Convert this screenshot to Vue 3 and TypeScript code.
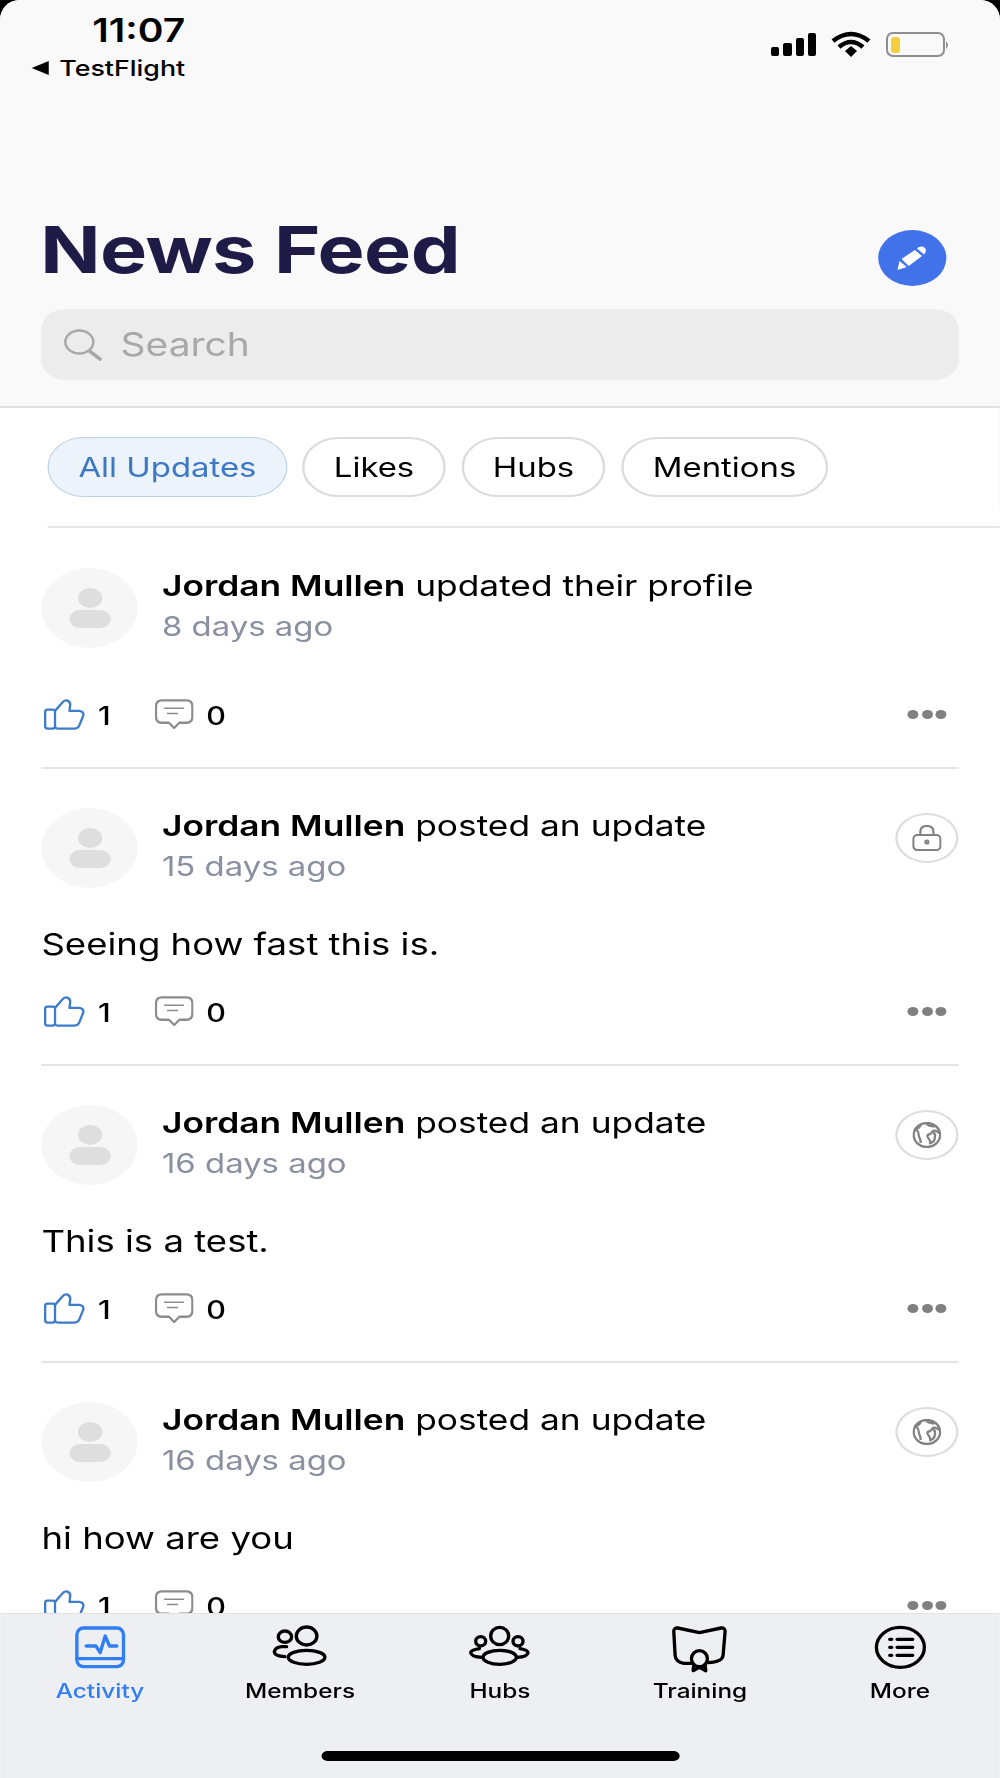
<template>
  <div class="phone">
    <header class="top">
      <div class="status">
        <div class="status-left">
          <span class="clock">11:07</span>
          <span class="back"><i class="back-arrow"></i>TestFlight</span>
        </div>
        <svg class="status-icons" viewBox="0 0 181 30" preserveAspectRatio="none">
          <rect x="0" y="17" width="8" height="9" rx="2" />
          <rect x="12" y="13" width="9" height="13" rx="2" />
          <rect x="25" y="8" width="8" height="18" rx="2" />
          <rect x="37" y="3" width="8" height="23" rx="2" />
          <path d="M62 11 Q80 -3 98 11 M68 17 Q80 7 92 17" fill="none" stroke="#000" stroke-width="4.5" />
          <path d="M74 21 L80 16 L86 21 L80 27 Z" />
          <rect x="116" y="3" width="57" height="23" rx="6" fill="none" stroke="#8e8e8e" stroke-width="2" />
          <rect x="120" y="7" width="9" height="16" rx="3" fill="#f5cf3e" />
          <path d="M175 11 Q179 15 175 19 Z" fill="#8e8e8e" />
        </svg>
      </div>
      <div class="title-row">
        <h1>News Feed</h1>
        <button class="compose">
          <svg viewBox="0 0 31 25" preserveAspectRatio="none">
            <path d="M1 24 L3 15 L10 21 Z M5 13 L18 4 L25 10 L12 20 Z M20 2.5 Q24 -1 28 2 Q30 5 27 8.500 Z" fill="#fff" />
          </svg>
        </button>
      </div>
      <div class="search">
        <svg viewBox="0 0 39 32" preserveAspectRatio="none">
          <ellipse cx="16" cy="13" rx="14" ry="11.500" fill="none" stroke="#a8a8a8" stroke-width="2.500" />
          <path d="M26 22 L38 31" stroke="#a8a8a8" stroke-width="3.500" />
        </svg>
        <span>Search</span>
      </div>
    </header>

    <nav class="chips">
      <span v-for="chip in chips" :key="chip" class="chip" :class="{ 'is-active': chip === 'All Updates' }">{{ chip }}</span>
    </nav>

    <main class="feed">
      <article v-for="post in posts" :key="post.id" class="post">
        <div class="post-head">
          <div class="avatar"><i class="avatar-head"></i><i class="avatar-body"></i></div>
          <div class="post-meta">
            <p class="post-title"><b>Jordan Mullen</b> {{ post.action }}</p>
            <p class="post-time">{{ post.time }}</p>
          </div>
          <span v-if="post.scope" class="scope">
            <svg v-if="post.scope === 'lock'" viewBox="0 0 29 26" preserveAspectRatio="none" fill="none" stroke="#828282" stroke-width="2.200">
              <rect x="1" y="10" width="27" height="15" rx="4" />
              <path d="M8 10 V7 Q8 1 14.500 1 Q21 1 21 7 V10" />
              <circle cx="14.500" cy="17" r="1.500" />
            </svg>
            <svg v-else viewBox="0 0 31 26" preserveAspectRatio="none" fill="none" stroke="#828282" stroke-width="2.400">
              <ellipse cx="15.500" cy="13" rx="14" ry="12" />
              <path d="M9 2.500 Q8 6 4 7 Q7 10 7 14 Q9 18 9 21 M15 2 Q19 5 24 4 M29 11 Q25 8 22 9 L19 12 Q14 13 17 16 Q19 18 19 21 Q24 20 24 15 Q25 12 22 11" />
            </svg>
          </span>
        </div>
        <p v-if="post.body" class="post-body">{{ post.body }}</p>
        <div class="actions">
          <svg class="ic-like" viewBox="0 0 126 94" preserveAspectRatio="none" fill="none" stroke="#3d7cc9" stroke-width="7" stroke-linejoin="round">
            <rect x="4" y="32" width="30" height="58" rx="7" />
            <path d="M34 36 L55 12 Q63 2 72 5 Q82 10 80 20 L78 36 L108 36 Q122 38 120 50 L108 80 Q104 90 92 90 L42 90 Q36 90 34 84" />
          </svg>
          <span class="count">1</span>
          <svg class="ic-comment" viewBox="0 0 120 94" preserveAspectRatio="none" fill="none" stroke="#8c8c8c" stroke-width="7" stroke-linejoin="round">
            <path d="M22 4 H98 Q116 4 116 22 V54 Q116 72 98 72 H76 L60 88 L44 72 H22 Q4 72 4 54 V22 Q4 4 22 4 Z" />
            <path d="M29 28 H90 M38 44 H72" stroke-width="5" />
          </svg>
          <span class="count">0</span>
          <span class="dots"><i></i><i></i><i></i></span>
        </div>
      </article>
    </main>

    <footer class="tabbar">
      <div class="tabs">
        <div v-for="tab in tabs" :key="tab.label" class="tab" :class="{ 'is-active': tab.label === 'Activity' }">
          <svg viewBox="0 0 170 138" preserveAspectRatio="none" fill="none" stroke="currentColor" stroke-width="10" stroke-linecap="round" stroke-linejoin="round">
            <g v-if="tab.label === 'Activity'">
              <rect x="15" y="6" width="140" height="116" rx="20" />
              <path d="M15 98 H155" />
              <path d="M43 60 H72 L85 80 L100 30 L113 60 H135" />
            </g>
            <g v-else-if="tab.label === 'Members'">
              <ellipse cx="105" cy="30" rx="31" ry="27" />
              <ellipse cx="40" cy="32" rx="20" ry="17" />
              <ellipse cx="105" cy="94" rx="55" ry="21" />
              <path d="M45 62 H30 Q10 64 8 78 Q10 90 40 92" />
            </g>
            <g v-else-if="tab.label === 'Hubs'">
              <ellipse cx="85" cy="30" rx="27" ry="26" />
              <ellipse cx="28" cy="46" rx="15" ry="14" />
              <ellipse cx="140" cy="46" rx="15" ry="14" />
              <ellipse cx="85" cy="94" rx="50" ry="21" />
              <path d="M24 68 Q-2 72 -2 80 Q0 92 32 94 M146 68 Q170 72 170 80 Q168 92 138 94" />
            </g>
            <g v-else-if="tab.label === 'Training'">
              <path d="M60 112 H38 Q14 108 12 88 L8 16 Q8 5 20 6 L85 20 L150 6 Q162 5 162 16 L156 88 Q154 108 110 110" />
              <circle cx="85" cy="98" r="24" />
              <path d="M68 116 L66 134 L85 124 L104 134 L102 116" />
            </g>
            <g v-else>
              <ellipse cx="85" cy="64" rx="72" ry="60" />
              <path d="M75 40 H122 M75 64 H122 M75 88 H122" />
              <path d="M53 40 H59 M53 64 H59 M53 88 H59" />
            </g>
          </svg>
          <span>{{ tab.label }}</span>
        </div>
      </div>
      <div class="home-bar"></div>
    </footer>
  </div>
</template>

<script setup lang="ts">
interface Post {
  id: number;
  action: string;
  time: string;
  body?: string;
  scope?: 'lock' | 'globe';
}

const chips: string[] = ['All Updates', 'Likes', 'Hubs', 'Mentions'];

const posts: Post[] = [
  { id: 1, action: 'updated their profile', time: '8 days ago' },
  { id: 2, action: 'posted an update', time: '15 days ago', body: 'Seeing how fast this is.', scope: 'lock' },
  { id: 3, action: 'posted an update', time: '16 days ago', body: 'This is a test.', scope: 'globe' },
  { id: 4, action: 'posted an update', time: '16 days ago', body: 'hi how are you', scope: 'globe' },
];

const tabs = [
  { label: 'Activity' },
  { label: 'Members' },
  { label: 'Hubs' },
  { label: 'Training' },
  { label: 'More' },
];
</script>

<style>
html,
body {
  margin: 0;
  background: #000;
  overflow: hidden;
}
</style>

<style scoped>
/* the capture is a phone screen stretched sideways, so the whole page is too */
.phone {
  width: 821px;
  height: 1778px;
  display: flex;
  flex-direction: column;
  overflow: hidden;
  background: #fff;
  border-radius: 16px 16px 0 0 / 20px 20px 0 0;
  transform: scaleX(1.218);
  transform-origin: left top;
  font-family: Inter, "Liberation Sans", sans-serif;
  color: #000;
}

p,
h1 {
  margin: 0;
}

.top {
  flex-shrink: 0;
  padding: 0 34px 26px;
  background: #f9f9f9;
  border-bottom: 2px solid #e2e2e2;
  box-sizing: border-box;
  height: 408px;
}

.status {
  height: 208px;
  display: flex;
  justify-content: space-between;
  align-items: flex-start;
  box-sizing: border-box;
  margin: 0 -34px;
  padding: 14px 39.400px 0 0;
}

.status-left {
  width: 152px;
  display: flex;
  flex-direction: column;
  align-items: flex-end;
}

.clock {
  font-size: 32px;
  line-height: 34px;
  font-weight: 600;
}

.back {
  display: flex;
  align-items: center;
  gap: 9px;
  margin-top: 7px;
  font-size: 22px;
  line-height: 26px;
  font-weight: 500;
}

.back-arrow {
  width: 0;
  height: 0;
  border-style: solid;
  border-width: 7px 14px 7px 0;
  border-color: transparent #000 transparent transparent;
}

.status-icons {
  width: 148.600px;
  height: 30px;
  margin-top: 16px;
}

.title-row {
  height: 80px;
  display: flex;
  justify-content: space-between;
  align-items: flex-end;
}

h1 {
  margin: 0 0 -2px -1px;
  font-size: 65px;
  line-height: 80px;
  font-weight: 700;
  letter-spacing: -0.5px;
  color: #1f1b47;
}

.compose {
  width: 56px;
  height: 56px;
  margin: 0 10px 2px 0;
  padding: 0;
  border: 0;
  border-radius: 50%;
  background: #4172ea;
  display: flex;
  align-items: center;
  justify-content: center;
}

.compose svg {
  width: 26px;
  height: 25px;
}

.search {
  height: 71px;
  margin-top: 21px;
  padding-left: 18px;
  display: flex;
  align-items: center;
  gap: 15px;
  border-radius: 20px;
  background: #ececec;
  font-size: 32px;
  color: #a8a8a8;
}

.search svg {
  width: 32px;
  height: 32px;
}

.chips {
  flex-shrink: 0;
  display: flex;
  gap: 12.500px;
  padding: 29px 0;
  margin-left: 39.400px;
  border-bottom: 2px solid #e6e6e6;
  height: 120px;
  box-sizing: border-box;
}

.chip {
  height: 60px;
  padding: 0 24px;
  display: flex;
  align-items: center;
  box-sizing: border-box;
  border: 2px solid #dcdcdc;
  border-radius: 30px;
  font-size: 27px;
}

.chip.is-active {
  background: #edf3fa;
  border: 1px solid #bcd3ea;
  padding: 0 24px;
  color: #3d78c4;
}

.feed {
  flex: 1;
  min-height: 0;
  overflow: hidden;
  padding: 0 34px;
}

.post {
  padding: 39px 0 33px;
  border-bottom: 2px solid #e4e4e4;
}

.post:first-child {
  padding-top: 40px;
}

.post-head {
  display: flex;
  height: 80px;
}

.avatar {
  width: 79px;
  height: 80px;
  flex-shrink: 0;
  display: flex;
  flex-direction: column;
  align-items: center;
  justify-content: center;
  gap: 2px;
  border-radius: 50%;
  background: #f6f6f6;
}

.avatar-head {
  width: 20px;
  height: 20px;
  border-radius: 50%;
  background: #dedede;
}

.avatar-body {
  width: 34px;
  height: 18px;
  border-radius: 9px;
  background: #dedede;
}

.post-meta {
  flex: 1;
  margin-left: 20px;
}

.post-title {
  font-size: 29px;
  line-height: 40px;
  margin-top: -2px;
}

.post-title b {
  font-weight: 600;
}

.post-time {
  margin-top: 1px;
  font-size: 27px;
  line-height: 40px;
  color: #8a90a0;
}

.scope {
  width: 52px;
  height: 50px;
  margin-top: 5px;
  box-sizing: border-box;
  display: flex;
  align-items: center;
  justify-content: center;
  border: 2px solid #dedede;
  border-radius: 50%;
}

.scope svg {
  width: 24px;
  height: 26px;
}

.post-body {
  margin-top: 36px;
  font-size: 30px;
  line-height: 40px;
}

.actions {
  height: 40px;
  margin-top: 46px;
  display: flex;
  align-items: center;
}

.post-body + .actions {
  margin-top: 27px;
}

.ic-like {
  width: 34px;
  height: 31px;
  margin: 1px 0 0 2px;
}

.ic-comment {
  width: 32px;
  height: 31px;
  margin: 1px 0 0 36px;
}

.count {
  margin: 3px 0 0 10.500px;
  font-size: 25px;
  font-weight: 500;
}

.dots {
  margin-left: auto;
  margin-right: 10px;
  display: flex;
  gap: 2.500px;
}

.dots i {
  width: 9px;
  height: 9px;
  border-radius: 50%;
  background: #808080;
}

.tabbar {
  flex-shrink: 0;
  height: 165px;
  box-sizing: border-box;
  background: #eeeff3;
  border-top: 1px solid #e2e2e2;
}

.tabs {
  display: grid;
  grid-template-columns: repeat(5, 1fr);
  padding-top: 12px;
}

.tab {
  display: flex;
  flex-direction: column;
  align-items: center;
  font-size: 20px;
  line-height: 26px;
  font-weight: 500;
  color: #000;
}

.tab.is-active {
  color: #2f7ef5;
}

.tab svg {
  width: 46.500px;
  height: 46px;
  overflow: visible;
  margin-bottom: 6px;
}

.home-bar {
  width: 294px;
  height: 10px;
  margin: 47px auto 0;
  border-radius: 5px;
  background: #000;
}
</style>
